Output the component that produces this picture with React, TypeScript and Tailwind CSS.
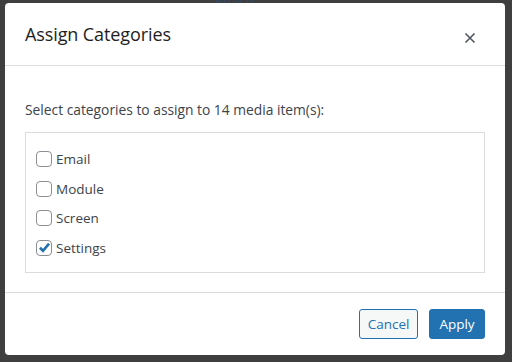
import React, { useState } from 'react';

const categories = ['Email', 'Module', 'Screen', 'Settings'];

export default function App() {
    const [checked, setChecked] = useState<Record<string, boolean>>({ Settings: true });

    const toggle = (name: string) => setChecked(prev => ({ ...prev, [name]: !prev[name] }));

    return (
        <div className="relative w-[512px] h-[362px] bg-[#3f3f3f] overflow-hidden" style={{ fontFamily: '"Open Sans", "Noto Sans", sans-serif' }}>
            <div className="absolute left-[215px] top-[-9px] text-[13px] text-[#2c4a6b]">Attach</div>
            <div className="absolute left-[5px] top-[3px] w-[500px] h-[352px] bg-white rounded-[4px] flex flex-col text-[#1e1e1e]">
                <div className="h-[63px] flex items-center justify-between pl-5 pr-[29px] border-b border-[#dcdcde]">
                    <h2 className="text-[18px] font-normal tracking-[-0.1px] mt-[1px]">Assign Categories</h2>
                    <button className="text-[#50575e]">
                        <svg width="12" height="12" viewBox="0 0 12 12" className="mt-[8px]">
                            <path d="M1.5 1.5 L10.5 10.5 M10.5 1.5 L1.5 10.5" stroke="currentColor" strokeWidth="1.6" />
                        </svg>
                    </button>
                </div>
                <div className="flex-1 px-5 pt-[35px] border-b border-[#dcdcde]">
                    <p className="text-[13.8px] text-[#3c434a] leading-[18px]">Select categories to assign to 14 media item(s):</p>
                    <div className="mt-[13px] h-[141px] border border-[#dcdcde] pl-[10px] pt-[18px] flex flex-col gap-[13.5px]">
                        {categories.map(name => (
                            <label key={name} className="flex items-center gap-[4px] cursor-pointer">
                                <span
                                    onClick={() => toggle(name)}
                                    className="w-[16px] h-[16px] rounded-[4px] border border-[#8c8f94] bg-white flex items-center justify-center"
                                >
                                    {checked[name] && (
                                        <svg width="13" height="13" viewBox="0 0 12 12">
                                            <path d="M1.8 6.2 L4.6 9 L10.2 2.4" fill="none" stroke="#2271b1" strokeWidth="2.4" />
                                        </svg>
                                    )}
                                </span>
                                <span className="text-[13.5px] text-[#3c434a] leading-[16px]">{name}</span>
                            </label>
                        ))}
                    </div>
                </div>
                <div className="h-[62px] flex items-center justify-end gap-[11px] px-5">
                    <button className="h-[30px] w-[59px] rounded-[3px] border border-[#2271b1] bg-[#f6f7f7] text-[#2271b1] text-[13.5px]">Cancel</button>
                    <button className="h-[30px] w-[56px] rounded-[3px] border border-[#2271b1] bg-[#2271b1] text-white text-[13.5px]">Apply</button>
                </div>
            </div>
        </div>
    );
}
